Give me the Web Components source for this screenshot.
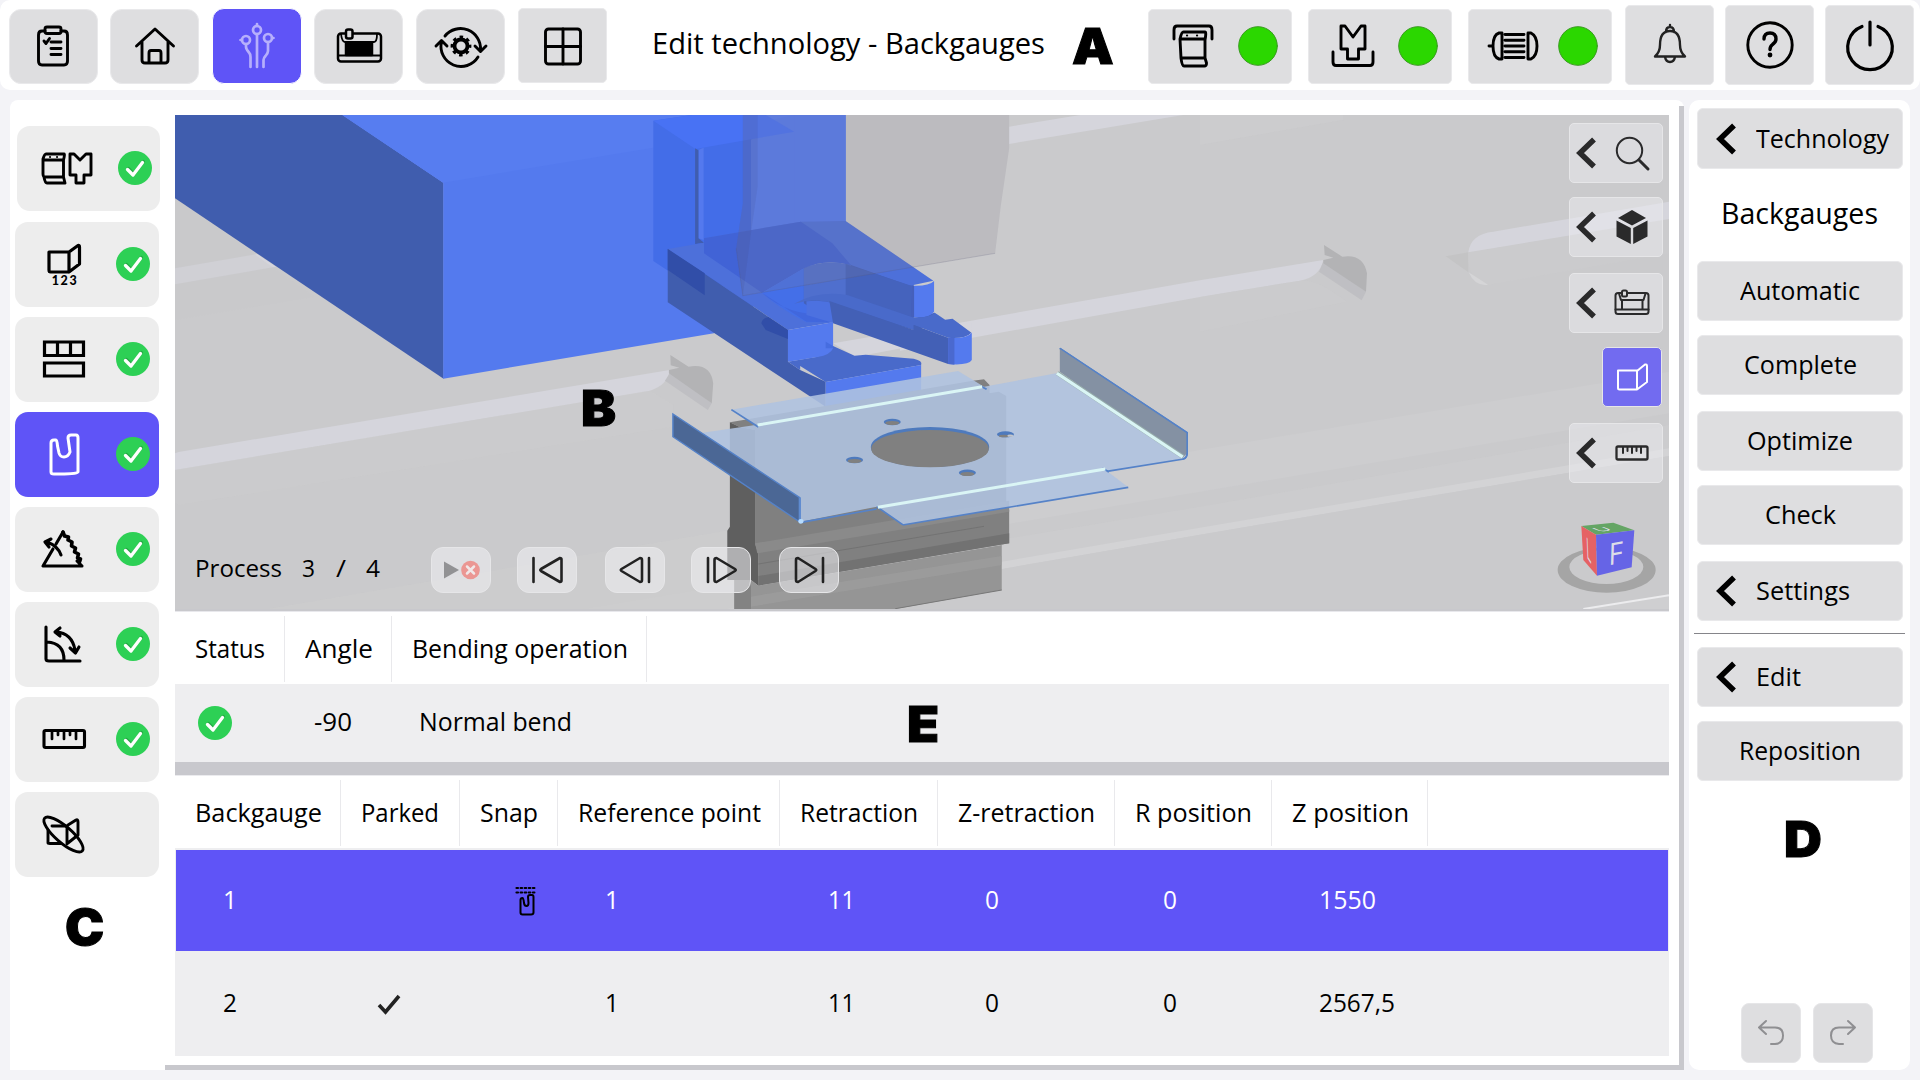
<!DOCTYPE html>
<html lang="en">
<head>
<meta charset="utf-8">
<title>Edit technology - Backgauges</title>
<style>
html,body{margin:0;padding:0}
body{width:1920px;height:1080px;overflow:hidden;background:#f3f3f7;font-family:"Open Sans","Noto Sans",sans-serif;color:#000}
</style>
</head>
<body>
<bend-app></bend-app>
<script>
const define = (name, css, html, after) => customElements.define(name, class extends HTMLElement {
  connectedCallback() {
    if (this.shadowRoot) return;
    const root = this.attachShadow({ mode: 'open' });
    root.innerHTML = `<style>*{box-sizing:border-box}${css}</style>` + (typeof html === 'function' ? html(this) : html);
    if (after) after(this, root);
  }
});

/* ---------- icons: 64x64 boxes, origin in the centre ---------- */
const ICONS = {
  clipboard: `<path d="M-8-15H-11Q-14.500-15-14.500-11V15Q-14.500 19-11 19H11Q14.500 19 14.500 15V-11Q14.500-15 11-15H8"/><rect x="-8" y="-19" width="16" height="6.500" rx="2"/><path d="M-9-5l2 2.500 3.500-5M-2-4H8M-2 2.500H8M-2 8.500H8"/>`,
  home: `<path d="M-18.500 0L0-17 18.500 0M-13-4V14Q-13 17-10 17H10Q13 17 13 14V-4M-6 17V7Q-6 4.500-4 4.500H4Q6 4.500 6 7V17"/>`,
  tech: `<g stroke-width="2.700"><circle cx="0" cy="-16" r="4"/><circle cx="-11" cy="-6" r="4"/><circle cx="11" cy="-8" r="4"/><path d="M0-20v-2M-15-6h-1.500M15-8h1.500M0-12V21M-11-2V1Q-11 3-8 6.500-6.500 8-6.500 11V21M11-4V5Q11 7 8.500 10 6.500 12 6.500 14V21"/></g>`,
  machine: `<g stroke-width="2.500"><rect x="-21" y="-12.500" width="43" height="28" rx="3"/><rect x="-13" y="-3" width="26" height="12" fill="currentColor"/><path d="M-21 9.500H22M-18-12Q-17-4-14-4H15Q18-4 18-12" stroke-width="1.800"/><rect x="-13" y="-16.500" width="6.500" height="9" rx="2" fill="#dedee0"/></g>`,
  machine2: `<g stroke-width="2"><rect x="-16.500" y="-10" width="33" height="21" rx="2.500"/><path d="M-16.500 6.500H16.500M-13-9.500L-11-3H11.500L13.500-9.500M-10-3V6M10.500-3V6"/><rect x="-10" y="-12.500" width="5" height="6" rx="1.500" fill="#dcdcde"/></g>`,
  cycle: `<path d="M-16-10A20 20 0 0 1 19.500 4M14 0L19.500 5.500 25 0M17 11A20 20 0 0 1-19.500-4M-25 0L-19.500-5.500-14 0"/><circle r="6.500" stroke-width="3.800"/><circle r="9" stroke-width="2.800" stroke-dasharray="3.534" stroke-dashoffset="1.700" stroke-linecap="butt"/>`,
  grid: `<rect x="-17.500" y="-17" width="35" height="35" rx="3"/><path d="M0-17V18M-17.500.500H17.500"/>`,
  press: `<path d="M-19-7V-16Q-19-20-16-20H16Q19-20 19-16V-7M-13-7Q-11.500-14-9.500-14H12Q13.500-14 12-6V12L13.500 17Q13.500 20 11.500 20H-9Q-11 20-12 12L-13-7M-12-7H12M-12 12H12"/><path d="M-6-10.500h.1M4-10.500h.1" stroke-width="2.200"/>`,
  die: `<path d="M-12-20H-8L0-9 8-20H12V3H5.500V13H-5.500V3H-12ZM-20 6V16Q-20 19.500-17 19.500H17Q20 19.500 20 16V6"/>`,
  motor: `<path d="M-11-13H-14Q-20-11-20 0T-14 13H-11ZM15-13H18Q24-10 24 0T18 13H15ZM-24 0h3M-8-11.500H11M-8-5.800H11M-8 0H11M-8 5.800H11M-8 11.500H11"/>`,
  bell: `<path stroke-width="2.400" stroke="#222" d="M-15 11.500Q-10 7-10 0-10-14 0-14T10 0Q10 7 15 11.500ZM-4-13Q-4-18 0-18T4-13M0-20V-18M-5 12Q-4 17 0 17T5 12"/>`,
  help: `<circle r="22.200" stroke-width="2.900"/><path stroke-width="3.400" d="M-6-6Q-6-12 0-12T6-6Q6-3 2.500-.500 0 1.500 0 4.500"/><circle cy="10" r="2.400" fill="currentColor" stroke="none"/>`,
  power: `<path stroke-width="3.200" d="M-8-18.500A22.300 22.300 0 1 0 8-18.500M0-23V0"/>`,
  tools: `<g stroke-width="2.900"><path d="M-23-9Q-21.500-14-20-14H-2Q-1-14-2.500-8V9L-1 15H-19Q-21 15-22 9Q-23 8-23 6ZM-22-8H-3M-22 9H-3M4-14H8L14-8 20-14H25V7H18V15H10V7H4Z"/><path d="M-16-11h.1M-9-11h.1" stroke-width="2"/></g>`,
  bend: `<g stroke-width="2"><path d="M-14-6.500H5V12.500H-12.500Q-14 12.500-14 11ZM5-6L13-12.500Q15-13 15-11V5L5 12.500"/></g>`,
  numbers: `<g stroke-width="3.200"><path d="M-15-12H5V8H-13.500Q-15 8-15 6ZM5-12L14-18.500Q15.500-19 15.500-17V0L5 8"/></g><text x="1" y="21" text-anchor="middle" font-family="Lato" font-weight="900" font-size="12.500" letter-spacing="1.600" fill="currentColor" stroke="none">123</text>`,
  stations: `<g stroke-width="3.200" stroke-linejoin="miter"><path d="M-19.500-17H19.500V-3.500H-19.500ZM-6.500-17V-3.500M6.500-17V-3.500M-19.500 4H19.500V17H-19.500Z"/></g>`,
  gauge: `<path stroke-width="3" d="M-13-11Q-13-14-10-14H-8Q-7-14-6.500-8L-5-1Q-4 3 0 3T6-2L4-16Q4-19 7-19H12Q14-19 14-16V18Q14 20-4 20H-10Q-13 20-13 18Z"/>`,
  spring: `<g stroke-width="3.100"><path d="M-1-17L-8-5M-11 0L-21 17H18L13 12"/><path stroke-width="3.600" d="M-1-17l1.500 4 4 1-.5 3 4 2-.5 4 4 2-1 4 4 2-1 4 3 1-1 3"/><path d="M-3 6Q-6-3-17-7M-19-7l6-3M-19-7l4 5"/></g>`,
  angle: `<g stroke-width="3.100"><path d="M-18-17V15Q-18 17-15 17H16M-17-2Q0-1 0 16M-8-12Q8-11 11 6M-4-16l-5 4 5 4M6 4l5.500 5L15 3"/></g>`,
  ruler: `<g stroke-width="3.100"><rect x="-20" y="-8.500" width="40.500" height="17" rx="1.500"/><path stroke-width="2.700" d="M-12-8V0M-6-8V-4M0-8V0M6-8V-4M12-8V0"/></g>`,
  ruler2: `<g stroke-width="2.300"><rect x="-15.500" y="-6.500" width="31" height="13" rx="1.500"/><path stroke-width="2" d="M-9-6V0M-4.500-6V-2M0-6V0M4.500-6V-2M9-6V0"/></g>`,
  collide: `<g stroke-width="2.900"><path d="M-12-8H3V10M4-9L12-14Q14-15 14-12V1L4 9M-16-4V9Q-16 9.500-14 9.500H-3"/><ellipse rx="25" ry="8" transform="translate(-.500 .500) rotate(41)"/></g>`,
  search: `<g stroke-width="2"><circle cx="-2.500" cy="-2.500" r="12.700"/><path d="M7 7L16 16" stroke-width="3"/></g>`,
  cube: `<g fill="#2a2a2b" stroke="none"><path d="M0-17L14-9 0-1.500-14-9ZM-15.500-6.500L-1.200 1V17L-15.500 9.500ZM15.500-6.500L1.200 1V17L15.500 9.500Z"/></g>`,
  tick: `<circle r="17" fill="#2dd055" stroke="none"/><path d="M-7.500 1.500L-2 7 7.500-5.500" stroke="#25a945" stroke-width="3.300" transform="translate(.8 -1)"/><path d="M-7.500 1.500L-2 7 7.500-5.500" stroke="#fff" stroke-width="3.300"/>`,
  chev: `<path d="M8-13.500L-6 0 8 13.500" stroke-width="5.500" stroke-linecap="butt" stroke-linejoin="miter"/>`,
  lamp: `<circle r="19.300" fill="#2bd700" stroke="#3b9a22" stroke-width="1"/>`,
  first: `<path stroke-width="2.600" d="M-13.500-12V12M13-12Q14.500-12 14.500-10.500V10.500Q14.500 12 13 12L-6 1Q-7.500 0-6-1Z"/>`,
  prev: `<path stroke-width="2.600" d="M14-12V12M5-12Q7-12 7-10V10Q7 12 5 12L-13.500 1Q-15 0-13.500-1Z"/>`,
  next: `<path stroke-width="2.600" d="M-13-12V12M-4.500-12Q-6.500-12-6.500-10V10Q-6.500 12-4.500 12L14 1Q15.500 0 14-1Z"/>`,
  last: `<path stroke-width="2.600" d="M14-12V12M-11-12Q-13-12-13-10V10Q-13 12-11 12L6.500 1Q8 0 6.500-1Z"/>`,
  stop: `<path d="M-17-8.500L-2 0-17 8.500Z" fill="#929294" stroke="none"/><circle cx="9.500" r="9.300" fill="#eb9793" stroke="none"/><path d="M6-3.500l7 7M13-3.500l-7 7" stroke="#f1e8e8" stroke-width="2.500"/>`,
  check: `<path d="M-10 1L-3.500 8 10-8" stroke-width="3.600" stroke="#222" stroke-linecap="butt" stroke-linejoin="miter"/>`,
  snap: `<g stroke-width="2"><path stroke-dasharray="1.500 2.600" d="M-9.500-13H10M-9.500-8.500H10" stroke-width="2.200"/><path d="M-5.500-1Q-5.500-3-3.500-3-2.500-3-2 2 -1.500 5 .5 5T2.500 2L2-4Q2-6 4-6H6Q7.500-6 7.500-4V11.500Q7.500 13.500 5 13.500H-3.500Q-5.500 13.500-5.500 11.500Z"/></g>`,
  undo: `<path stroke-width="2" d="M-5-12L-12-5.500-5 1M-12-5.500H4Q12-5.500 12 2.500T4 11H0"/>`,
  redo: `<path stroke-width="2" d="M5-12L12-5.500 5 1M12-5.500H-4Q-12-5.500-12 2.500T-4 11H0"/>`
};
define('ui-icon', `:host{display:block;flex:none;width:64px;height:64px}svg{display:block;width:100%;height:100%}`,
  el => `<svg viewBox="-32 -32 64 64" fill="none" stroke="currentColor" stroke-width="2.900" stroke-linecap="round" stroke-linejoin="round">${ICONS[el.getAttribute('name')]}</svg>`);

/* ---------- text set to a given advance width ---------- */
define('fit-text', `:host{display:block;flex:none;white-space:pre}span{display:inline-block;transform-origin:0 50%;line-height:36px}`,
  `<span><slot></slot></span>`, (el, root) => {
    const s = root.querySelector('span'), w = +el.getAttribute('w');
    el.style.fontSize = (el.getAttribute('size') || 25.7) + 'px';
    el.style.height = '36px';
    const n = s.offsetWidth ? s.getBoundingClientRect().width : w;
    el.style.width = w + 'px';
    s.style.transform = `scaleX(${w / n})`;
  });

define('big-mark', `:host{display:block;position:absolute;font:900 49.500px/50px Inter,sans-serif;-webkit-text-stroke:1px #000;transform:scaleX(1.060);transform-origin:0 0;z-index:5}`, `<slot></slot>`);

/* ---------- buttons ---------- */
define('bar-button', `:host{display:flex;flex:none;align-items:center;justify-content:center;width:89px;height:75px;border-radius:12px;background:#dedee0;border:1px solid #e9e9eb;overflow:hidden}
:host([square]){border-radius:5px}
:host([square]) ui-icon{margin-left:1px}
:host([tall]){height:80px;border-radius:5px}
:host([tall]) ui-icon{margin-left:1px}
:host([wide]){width:144px;border-radius:5px;justify-content:flex-start;padding-left:12px}
:host([active]){background:#5f54f7;border-color:#fff;color:#b6affc;width:90px;height:76px}
ui-icon+ui-icon{margin-left:1px}`,
  el => `<ui-icon name="${el.getAttribute('icon')}"></ui-icon>${el.hasAttribute('wide') ? '<ui-icon name="lamp"></ui-icon>' : ''}`);

define('side-button', `:host{display:flex;align-items:center;width:144px;height:85px;border-radius:13px;background:#ededed;margin-bottom:10px;padding:0 0 2px 17px}
:host([active]){background:#5f54f7;color:#fff}
ui-icon+ui-icon{margin-left:5px;color:#fff}`,
  el => `<ui-icon name="${el.getAttribute('icon')}"></ui-icon>${el.hasAttribute('ok') ? '<ui-icon name="tick"></ui-icon>' : ''}`);

define('menu-button', `:host{display:flex;align-items:center;justify-content:center;width:206px;height:60px;border-radius:6px;background:#dedee0;border:1px solid #e9e9eb;overflow:hidden}
:host([sub]){justify-content:flex-start}
ui-icon{margin-left:-4px;width:64px;margin-right:-2.500px}`,
  el => (el.hasAttribute('sub') ? '<ui-icon name="chev"></ui-icon>' : '') + `<fit-text size="24.600" w="${el.getAttribute('w')}">${el.textContent}</fit-text>`);

define('view-button', `:host{display:flex;align-items:center;width:94px;height:60px;border-radius:5px;background:rgba(240,240,244,.45);border:1px solid #e6e6e8;color:#2a2a2b;overflow:hidden;align-self:flex-end}
:host([solo]){width:60px;background:#726bf0;color:#fff;margin-right:1px}
.c{margin-left:-16px}.i{margin-left:-18px}:host([solo]) .i{margin-left:-3px}`,
  el => (el.hasAttribute('solo') ? '' : '<ui-icon class="c" name="chev"></ui-icon>') + `<ui-icon class="i" name="${el.getAttribute('icon')}"></ui-icon>`);

define('step-button', `:host{display:flex;flex:none;align-items:center;justify-content:center;width:60px;height:46px;border-radius:12px;background:rgba(240,240,244,.55);border:1px solid #e6e6e8;color:#222;overflow:hidden}
:host([plain]){width:60px;height:60px;background:#dedee0;color:#8f8f92;border-radius:8px}`,
  el => `<ui-icon name="${el.getAttribute('icon')}"></ui-icon>`);

/* ---------- 3D scene ---------- */
define('bend-scene', `:host{display:block;width:1494px;height:494px}svg{display:block}`, `
<svg width="1494" height="494" viewBox="175 115 1494 494">
<rect x="175" y="115" width="1494" height="494" fill="#cacacc"/>
<g transform="translate(1200 110) scale(.33333)">
 <path fill="#cdcdcf" d="M-594 1120L0 1020 1407 785V910L0 1145-594 1245Z"/>
 <path fill="#cdcdcf" d="M-3075 1700L0 1190 1407 945V1457L1150 1497H-3075Z" opacity=".6"/>
 <path fill="#d3d3d5" d="M-1700 1545L0 1253 1407 1015V1038L0 1274-1700 1568Z"/>
 <path fill="#cacacc" d="M-1700 1568L0 1274 1407 1038V1497H-1700Z"/>
 <path fill="#cfcfd1" d="M1150 1497L1407 1457V1497Z"/><path d="M1150 1497L1407 1456" stroke="#ececee" stroke-width="6"/>
 <path fill="#cdcdcf" d="M0 105L430 30 430 15H0Z" opacity=".5"/>
 <path fill="#d5d5dc" d="M-900 670L0 511 370 450Q360 500 300 512L0 561-900 722Z"/>
 <path fill="#cccccd" d="M0 561L300 512Q350 505 440 575L0 665Z" opacity=".6"/>
 <path fill="#bfbfc3" d="M357 485L370 455 498 545 485 571Z"/>
 <path fill="#b3b3b5" d="M372 405L427 440Q490 430 501 490L498 545 370 460V450L400 443 374 435Z"/>
 <path fill="#c4c4c5" d="M737 439L805 427V487Z"/>
 <path fill="#cbcbcd" d="M805 427L1407 327V430L865 524Q800 510 805 427Z"/>
 <path fill="#d5d5dc" d="M805 427Q812 372 880 365L1407 275V327Z"/>
 <path fill="#d5d5d7" d="M806 487L864 524Q825 530 806 487Z"/>
</g>
<g transform="translate(175 110) scale(.35714 .33333)">
 <path fill="#d5d5dc" d="M0 475L230 432 283 470 0 523Z"/>
 <path fill="#c8c8ca" d="M0 630L390 560 0 265Z" opacity=".4"/>
 <path fill="#d5d5dc" d="M0 1030L10 1026 1385 780Q1380 825 1330 842L0 1080Z"/>
 <path fill="#cdcdcf" d="M0 1080L1330 842 1395 885 1395 950 10 1185 0 1178Z" opacity=".35"/>
 <path fill="#cecece" d="M260 1497L1568 1258V1497Z" opacity=".55"/>
 <path fill="#bfbfc3" d="M1372 812L1388 785 1503 880 1492 900Z"/>
 <path fill="#b3b3b5" d="M1387 735L1438 770Q1500 758 1507 820L1503 880 1383 790V780L1412 773 1388 766Z"/>
 <path fill="#405dae" d="M0 15H470L752 218V806L0 265Z"/>
</g>
<g transform="translate(640 110) scale(.3699 .33333)">
 <path fill="#d5d5dc" d="M998 50L1190 15H1468L998 102Z"/>
 <path fill="#d5d5dc" d="M522 700L760 655 897 638 897 675 610 735 580 739Z"/>
 <path fill="#547aee" d="M-805 15L-532 218V806L200 670 556 400V15Z"/>
 <path fill="#577df0" d="M-805 15H417L36 113-532 218Z"/>
 <path fill="#436de8" d="M36 32L140 15H340L300 90V470L175 555 36 453Z"/>
 <path fill="#4872f4" d="M36 32L140 15H340L417 65 150 117Z"/>
 <path fill="#547aee" d="M417 15H556V340H417Z"/>
 <path fill="#5479ee" d="M158 120L172 113V390L158 385Z"/>
 <path fill="#405dae" d="M149 115L158 121V385L173 398 149 402Z"/>
 <path fill="#4461b8" d="M443 470L570 460 740 520V625L797 608 800 640 740 660 525 590 450 590 417 581Z"/>
 <path fill="#4d70da" d="M75 417L173 398V385L435 335 556 333 793 512 730 527 570 465Q500 445 443 475L330 548 450 633 522 637 400 660Z"/>
 <path fill="#4163d6" d="M173 385L435 335 520 400 570 465Q500 445 443 475L330 548 173 430Z"/>
 <path fill="#405dae" d="M75 417L400 660V755L433 780 502 815V890L458 858 75 577Z"/>
 <path fill="#314ea8" d="M75 417L175 490V556L75 480ZM328 640Q330 625 347 621L400 660V687L340 660Z"/>
 <path fill="#446fe8" d="M330 548L443 475V580L470 600 522 615V637H450Q370 590 330 548Z"/>
 <path fill="#4167dd" d="M330 548Q400 620 522 615V637L450 635Z"/>
 <path fill="#4f6fce" d="M443 475Q500 445 570 465V562L443 570Z"/>
 <path fill="#4563bd" d="M556 462L733 527 737 622 556 560Z"/>
 <path fill="#547aee" d="M733 527Q780 530 795 513V605Q785 625 737 622Z"/>
 <path fill="#4560bb" d="M733 527L741 528V622L733 620Z"/>
 <path fill="#496aca" d="M417 581Q480 540 560 555L737 622Q780 625 797 608L825 629 845 626 896 668Q880 687 833 683L740 645V660L525 580Q475 562 417 581Z"/>
 <path fill="#4c71e0" d="M450 574Q490 568 525 580V640L450 615Z"/>
 <path fill="#4360b6" d="M512 573L740 660V645L833 683V762L522 640Z"/>
 <path fill="#547aee" d="M833 683Q882 687 897 668V750Q888 767 833 762Z"/>
 <path fill="#4a69cf" d="M833 683H850V764L833 762Z"/>
 <path fill="#496aca" d="M400 755L480 740 522 708 580 737 610 734 740 746Q765 752 760 765L502 816 433 768V780Z"/>
 <path fill="#547aee" d="M400 660L522 637V715Q515 735 480 741L400 755Z"/>
 <path fill="#466de0" d="M502 695L522 708V715H502Z"/>
 <path fill="#547aee" d="M502 816L760 765V850L502 890Z"/>
 <path fill="rgba(127,121,140,.19)" d="M278 15H998V115L975 290 960 430 278 557 260 415 278 280Z"/>
 <path fill="rgba(60,60,110,.1)" d="M278 15H318V230L300 370 278 557 260 415 278 280Z"/>
 <path d="M260 415L278 557 960 430" fill="none" stroke="rgba(90,90,120,.3)" stroke-width="2"/>
 <!-- lower tool -->
 <path fill="#808080" d="M243 937L900 812 930 808 945 825V850L970 845 990 858V1190L998 1200V1300L320 1427V1330L311 1300V960L268 950Z"/>
 <path fill="#5f5f5f" d="M243 937L268 950 311 960V1300L320 1330V1427L300 1410H236V1262L243 1250Z"/>
 <path fill="#8a8a8a" d="M311 1300L998 1172V1205L317 1330Z"/>
 <path fill="#727272" d="M320 1398L998 1270V1300L320 1427Z"/>
 <path d="M320 1362L930 1249" stroke="#6c6c6c" stroke-width="2"/>
 <path fill="#959595" d="M255 1410H300L320 1427 978 1305V1440L690 1497H255Z"/>
 <path fill="#9e9e9e" d="M300 1460L978 1338V1365L300 1490Z" opacity=".7"/>
 <path fill="#838383" d="M255 1410H300V1497H255Z"/>
 <path d="M978 1440L690 1496" stroke="#777" stroke-width="3"/>
 <!-- sheet -->
 <path fill="#afc3e0" fill-opacity=".88" d="M247 899L860 783 930 830 1125 790 1475 1045 1265 1085 1320 1132 710 1245 640 1190 435 1235 170 968 312 945Z"/>
 <path d="M435 1237L640 1197M710 1245L1320 1132M1262 1084L1470 1047Q1479 1043 1479 1030V968L1135 715M640 1190L710 1244M1250 1075L1268 1086M247 899L320 951M920 828L937 838" fill="none" stroke="#5582c8" stroke-width="5"/>
 <path fill="#8491a3" d="M1135 715L1479 968V1030L1467 1043 1135 785Z"/>
 <path d="M1135 715L1479 968V1030Q1479 1045 1467 1047" fill="none" stroke="#5582c8" stroke-width="4"/>
 <path d="M1128 789L1468 1040" stroke="#94aaa9" stroke-width="13"/>
 <path d="M1127 790L1467 1041M318 945L925 830M643 1192L1258 1077" stroke="#daf5f5" stroke-width="9"/>
 <path fill="#4b6795" stroke="#5582c8" stroke-width="4" d="M89 912L432 1163V1236L89 980Z"/>
 <path d="M432 1163V1236" stroke="#5e8bd0" stroke-width="6"/><circle cx="435" cy="1234" r="7" fill="#b6dcff"/>
 <ellipse cx="784" cy="1011" rx="160" ry="60" fill="#4e7abd"/><ellipse cx="784" cy="1016" rx="159" ry="56" fill="#808080"/>
 <g fill="#4e7abd"><ellipse cx="682" cy="936" rx="23" ry="9.500"/><ellipse cx="988" cy="973" rx="23" ry="9"/><ellipse cx="580" cy="1050" rx="23" ry="9.500"/><ellipse cx="885" cy="1088" rx="23" ry="9.500"/></g>
 <g fill="#808080"><ellipse cx="682" cy="939" rx="19" ry="6"/><ellipse cx="984" cy="978" rx="14" ry="4"/><ellipse cx="580" cy="1053" rx="19" ry="6"/><ellipse cx="885" cy="1092" rx="19" ry="6"/></g>
 <ellipse cx="1001" cy="977" rx="8" ry="3.500" fill="#c4c6ca"/>
</g>
<!-- orientation cube -->
<g transform="translate(1200 110) scale(.33333)">
 <path fill="#a5a5a5" fill-rule="evenodd" d="M1073 1380A147 68 0 1 0 1367 1380A147 68 0 1 0 1073 1380ZM1108 1371A111 51 0 1 1 1330 1371A111 51 0 1 1 1108 1371Z"/>
 <path fill="#64a564" d="M1144 1248L1240 1238 1303 1261 1188 1274Z"/><path fill="#e56264" d="M1144 1248L1188 1274 1191 1397 1150 1350Z"/><path fill="#6664e6" d="M1188 1274L1303 1261 1295 1372 1191 1397Z"/>
 <g fill="#dddde8" font-family="Open Sans" text-anchor="middle">
 <text transform="matrix(.9 -.16 -.03 1 1246 1363)" font-size="92">F</text>
 <text transform="matrix(.3 .5 .04 1 1167 1352)" font-size="88">L</text>
 <text transform="matrix(1.350 -.15 .75 .31 1218 1263)" font-size="46">U</text></g>
</g>
</svg>`);

define('bend-view', `:host{display:block;position:relative;width:1494px;height:497px;background:#c8c8cc;border-bottom:1px solid #e8e8ec}
.tools{position:absolute;right:6px;top:8px;display:flex;flex-direction:column;gap:15px}
.tools .b{margin-top:-1px}
.steps{position:absolute;left:20px;top:432px;display:flex;align-items:center}
.steps fit-text{margin-top:-5px}`,
  `<bend-scene></bend-scene>
<div class="tools"><view-button icon="search"></view-button><view-button class="b" icon="cube"></view-button><view-button style="margin-top:1px" icon="machine2"></view-button><view-button class="b" solo icon="bend"></view-button><view-button style="margin-top:1px" icon="ruler2"></view-button></div>
<div class="steps"><fit-text size="24" w="87">Process</fit-text><fit-text size="24" style="margin-left:20px" w="13">3</fit-text><fit-text size="24" style="margin-left:21px" w="10">/</fit-text><fit-text size="24" style="margin-left:20px" w="14">4</fit-text>
<step-button style="margin-left:51px" icon="stop"></step-button><step-button style="margin-left:26px" icon="first"></step-button><step-button style="margin-left:28px" icon="prev"></step-button><step-button style="margin-left:26px" icon="next"></step-button><step-button style="margin-left:28px" icon="last"></step-button></div>`);

/* ---------- tables ---------- */
const OPS = [[110, 'Status', 70], [107, 'Angle', 68], [255, 'Bending operation', 216]];
const GAUGES = [[166, 'Backgauge', 127], [119, 'Parked', 78], [98, 'Snap', 58], [222, 'Reference point', 183], [158, 'Retraction', 118], [177, 'Z-retraction', 137], [157, 'R position', 117], [156, 'Z position', 117]];
const cells = (cols, row) => cols.map(([w], i) => {
  const c = row[i];
  return `<div class="cell" style="width:${w}px;padding-left:${c ? c[0] : 0}px">${!c ? '' : c[1] === 'icon' ? `<ui-icon name="${c[2]}"></ui-icon>` : `<fit-text w="${c[2]}">${c[1]}</fit-text>`}</div>`;
}).join('');
define('data-table', `:host{display:block}
.head{display:flex;height:72px;padding:4px 0 2px;background:#fff}
.head div{flex:none;border-right:1px solid #e9e9ec;padding-left:20px;display:flex;align-items:center}
.row{display:flex;background:#eeeef0}
.cell{flex:none;display:flex;align-items:center}
.cell fit-text{margin-top:-2px}
.sel{background:#5f54f7;color:#fff;border:1px solid #eeeef0;border-width:0 1px}
.sel ui-icon{color:#000}`,
  el => {
    const ops = el.getAttribute('kind') === 'operations', cols = ops ? OPS : GAUGES;
    const head = `<div class="head">${cols.map(([w, t, tw]) => `<div style="width:${w}px"><fit-text w="${tw}">${t}</fit-text></div>`).join('')}</div>`;
    if (ops) return head + `<div class="row" style="height:78px">${cells(OPS, [[8, 'icon', 'tick'], [29, '-90', 38], [27, 'Normal bend', 153]])}</div>`;
    return head + `<div style="height:2px;background:#eeeef0"></div>
<div class="row sel" style="height:101px">${cells(GAUGES, [[47, '1', 14], null, [33, 'icon', 'snap'], [46, '1', 14], [47, '11', 27], [46, '0', 14], [47, '0', 14], [46, '1550', 57]])}</div>
<div class="row" style="height:105px">${cells(GAUGES, [[48, '2', 14], [16, 'icon', 'check'], null, [47, '1', 14], [48, '11', 27], [47, '0', 14], [48, '0', 14], [47, '2567,5', 76]])}</div>`;
  });

/* ---------- panels ---------- */
define('top-bar', `:host{display:flex;width:1920px;height:90px;background:#fff;border-radius:10px;padding-left:8.500px;align-items:flex-start}`,
  `<bar-button icon="clipboard" style="margin-top:8.500px"></bar-button>
<bar-button icon="home" style="margin:8.500px 0 0 12.500px"></bar-button>
<bar-button icon="tech" active style="margin:8px 0 0 12.500px"></bar-button>
<bar-button icon="machine" style="margin:8.500px 0 0 12.500px"></bar-button>
<bar-button icon="cycle" style="margin:8.500px 0 0 13px"></bar-button>
<bar-button icon="grid" square style="margin:8px 0 0 13px"></bar-button>
<fit-text size="28.300" w="393" style="margin:24px 0 0 44.500px"><slot></slot></fit-text>
<bar-button icon="press" wide style="margin:8.500px 0 0 103.500px"></bar-button>
<bar-button icon="die" wide style="margin:8.500px 0 0 16px"></bar-button>
<bar-button icon="motor" wide style="margin:8.500px 0 0 16px"></bar-button>
<bar-button icon="bell" tall style="margin:5px 0 0 13px"></bar-button>
<bar-button icon="help" tall style="margin:5px 0 0 11px"></bar-button>
<bar-button icon="power" tall style="margin:5px 0 0 11px"></bar-button>`);

define('side-bar', `:host{display:block;flex:none;width:155px;padding:26px 0 0 5px}`,
  `<side-button icon="tools" ok style="margin:0 0 11px 2px;width:143px"></side-button><side-button icon="numbers" ok></side-button><side-button icon="stations" ok></side-button><side-button icon="gauge" active ok></side-button><side-button icon="spring" ok></side-button><side-button icon="angle" ok></side-button><side-button icon="ruler" ok></side-button><side-button icon="collide"></side-button>`);

define('work-area', `:host{display:flex;width:1674px;height:970px;background:#fff;border-radius:8px 8px 0 0}
main{flex:none;width:1519px;display:flex;flex-direction:column}
.body{margin-top:6px;height:959px;padding:9px 0 0 10px;border-right:5px solid #c8c8cd}
.split{width:1494px;height:14px;background:#c8c8cd;border-bottom:1px solid #ebebee}
.foot{height:5px;background:#c8c8cd}
data-table{width:1494px}`,
  `<side-bar></side-bar><main><div class="body"><bend-view></bend-view><data-table kind="operations"></data-table><div class="split"></div><data-table kind="gauges"></data-table></div><div class="foot"></div></main>`);

define('action-panel', `:host{display:flex;flex-direction:column;width:221px;height:970px;background:#fff;border-radius:10px;padding:8px 0 7px 8px}
.title{margin:20px 0 31px 24px}
hr{width:211px;height:1px;border:0;background:#85858a;margin:13px 0 13px -3px}
.hist{display:flex;gap:12px;margin:auto 0 0 44px}`,
  `<menu-button sub w="133" style="height:61px">Technology</menu-button>
<div class="title"><fit-text size="28.500" w="157" style="margin-top:5px">Backgauges</fit-text></div>
<menu-button w="120">Automatic</menu-button>
<menu-button w="113" style="margin-top:14px">Complete</menu-button>
<menu-button w="106" style="margin-top:16px">Optimize</menu-button>
<menu-button w="71" style="margin-top:14px">Check</menu-button>
<menu-button sub w="94" style="margin-top:16px">Settings</menu-button>
<hr style="margin-top:12px">
<menu-button sub w="45">Edit</menu-button>
<menu-button w="122" style="margin-top:14px">Reposition</menu-button>
<div class="hist"><step-button plain icon="undo"></step-button><step-button plain icon="redo"></step-button></div>`);

define('bend-app', `:host{display:block;position:relative;width:1920px;height:1080px}
.cols{display:flex;gap:5px;padding:10px 0 0 10px}`,
  `<top-bar>Edit technology - Backgauges</top-bar>
<div class="cols"><work-area></work-area><action-panel></action-panel></div>
<big-mark style="left:1072px;top:21px">A</big-mark>
<big-mark style="left:581px;top:383px">B</big-mark>
<big-mark style="left:65px;top:902px">C</big-mark>
<big-mark style="left:1784px;top:814px">D</big-mark>
<big-mark style="left:907px;top:699px">E</big-mark>`);
</script>
</body>
</html>
